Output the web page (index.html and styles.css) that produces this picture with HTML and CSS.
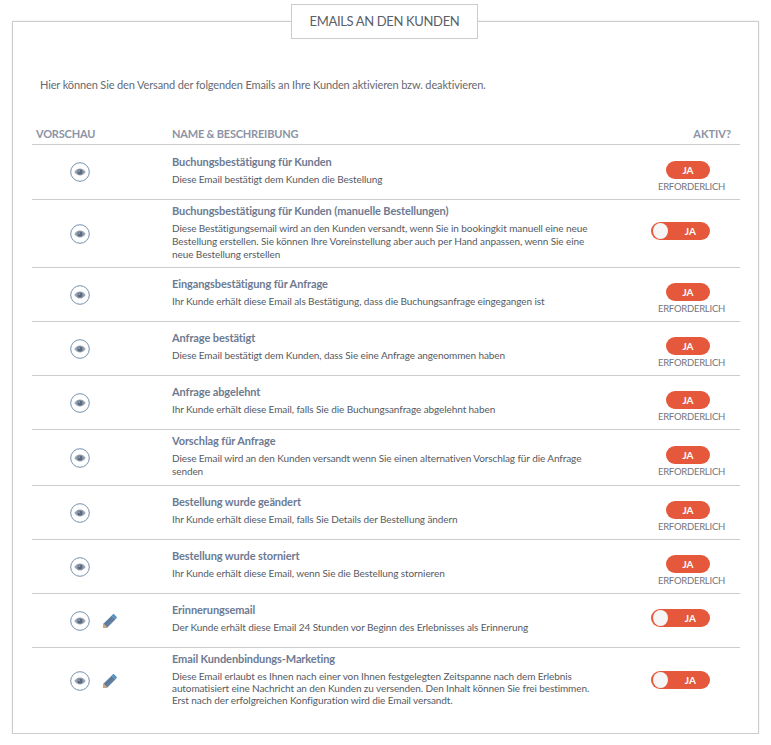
FILE: index.html
```html
<!DOCTYPE html>
<html lang="de">
<head>
    <meta charset="UTF-8">
    <title>Emails an den Kunden</title>
    <link rel="stylesheet" href="styles.css">
</head>
<body>

<svg class="sprite" width="0" height="0">
    <symbol id="eye" viewBox="0 0 20 20">
        <circle cx="10" cy="10" r="9.300" fill="none" stroke="#7590ae" stroke-width="1"/>
        <path d="M4.300 10c1.600-2.300 3.500-3.400 5.700-3.400s4.100 1.100 5.700 3.400c-1.600 2.300-3.500 3.400-5.700 3.400S5.900 12.300 4.300 10z" fill="#98a3b3"/>
        <circle cx="10" cy="10" r="2.600" fill="#5d6b80"/>
        <circle cx="9.100" cy="9.100" r=".7" fill="#d5dae2"/>
    </symbol>
    <symbol id="pencil" viewBox="0 0 16 16">
        <path d="M1 15l.7-4.800L10.400 1.500l4.100 4.100L5.800 14.300z" fill="#62809f"/>
        <path d="M11.400.5c.5-.5 1.200-.5 1.700 0l2.400 2.400c.5.500.5 1.200 0 1.700l-1 1-4.100-4.100z" fill="#4f93c9"/>
        <path d="M1 15l.7-4.800 4.100 4.100z" fill="#d9a77c"/>
        <path d="M3.600 11.400l7.400-7.400" stroke="#4a6a8e" stroke-width=".8"/>
    </symbol>
</svg>

<div class="panel">
    <h2 class="panel-title">EMAILS AN DEN KUNDEN</h2>
    <p class="intro">Hier können Sie den Versand der folgenden Emails an Ihre Kunden aktivieren bzw. deaktivieren.</p>

    <div class="mail-list">
        <div class="row head">
            <div class="col-preview">VORSCHAU</div>
            <div class="col-name">NAME &amp; BESCHREIBUNG</div>
            <div class="col-active">AKTIV?</div>
        </div>

        <div class="row first">
            <div class="col-preview"><svg class="eye"><use href="#eye"/></svg></div>
            <div class="col-name">
                <h4>Buchungsbestätigung für Kunden</h4>
                <p>Diese Email bestätigt dem Kunden die Bestellung</p>
            </div>
            <div class="col-active"><span class="pill">JA</span><span class="req">ERFORDERLICH</span></div>
        </div>

        <div class="row h68">
            <div class="col-preview"><svg class="eye"><use href="#eye"/></svg></div>
            <div class="col-name">
                <h4>Buchungsbestätigung für Kunden (manuelle Bestellungen)</h4>
                <p>Diese Bestätigungsemail wird an den Kunden versandt, wenn Sie in bookingkit manuell eine neue Bestellung erstellen. Sie können Ihre Voreinstellung aber auch per Hand anpassen, wenn Sie eine neue Bestellung erstellen</p>
            </div>
            <div class="col-active"><span class="toggle"><i class="knob"></i>JA</span></div>
        </div>

        <div class="row h54">
            <div class="col-preview"><svg class="eye"><use href="#eye"/></svg></div>
            <div class="col-name">
                <h4>Eingangsbestätigung für Anfrage</h4>
                <p>Ihr Kunde erhält diese Email als Bestätigung, dass die Buchungsanfrage eingegangen ist</p>
            </div>
            <div class="col-active"><span class="pill">JA</span><span class="req">ERFORDERLICH</span></div>
        </div>

        <div class="row h54">
            <div class="col-preview"><svg class="eye"><use href="#eye"/></svg></div>
            <div class="col-name">
                <h4>Anfrage bestätigt</h4>
                <p>Diese Email bestätigt dem Kunden, dass Sie eine Anfrage angenommen haben</p>
            </div>
            <div class="col-active"><span class="pill">JA</span><span class="req">ERFORDERLICH</span></div>
        </div>

        <div class="row h54">
            <div class="col-preview"><svg class="eye"><use href="#eye"/></svg></div>
            <div class="col-name">
                <h4>Anfrage abgelehnt</h4>
                <p>Ihr Kunde erhält diese Email, falls Sie die Buchungsanfrage abgelehnt haben</p>
            </div>
            <div class="col-active"><span class="pill">JA</span><span class="req">ERFORDERLICH</span></div>
        </div>

        <div class="row h56">
            <div class="col-preview"><svg class="eye"><use href="#eye"/></svg></div>
            <div class="col-name">
                <h4>Vorschlag für Anfrage</h4>
                <p>Diese Email wird an den Kunden versandt wenn Sie einen alternativen Vorschlag für die Anfrage senden</p>
            </div>
            <div class="col-active"><span class="pill">JA</span><span class="req">ERFORDERLICH</span></div>
        </div>

        <div class="row h54">
            <div class="col-preview"><svg class="eye"><use href="#eye"/></svg></div>
            <div class="col-name">
                <h4>Bestellung wurde geändert</h4>
                <p>Ihr Kunde erhält diese Email, falls Sie Details der Bestellung ändern</p>
            </div>
            <div class="col-active"><span class="pill">JA</span><span class="req">ERFORDERLICH</span></div>
        </div>

        <div class="row h54">
            <div class="col-preview"><svg class="eye"><use href="#eye"/></svg></div>
            <div class="col-name">
                <h4>Bestellung wurde storniert</h4>
                <p>Ihr Kunde erhält diese Email, wenn Sie die Bestellung stornieren</p>
            </div>
            <div class="col-active"><span class="pill">JA</span><span class="req">ERFORDERLICH</span></div>
        </div>

        <div class="row h54">
            <div class="col-preview icons"><svg class="eye"><use href="#eye"/></svg><svg class="pencil"><use href="#pencil"/></svg></div>
            <div class="col-name">
                <h4>Erinnerungsemail</h4>
                <p>Der Kunde erhält diese Email 24 Stunden vor Beginn des Erlebnisses als Erinnerung</p>
            </div>
            <div class="col-active"><span class="toggle"><i class="knob"></i>JA</span></div>
        </div>

        <div class="row last">
            <div class="col-preview icons"><svg class="eye"><use href="#eye"/></svg><svg class="pencil"><use href="#pencil"/></svg></div>
            <div class="col-name">
                <h4>Email Kundenbindungs-Marketing</h4>
                <p class="wide">Diese Email erlaubt es Ihnen nach einer von Ihnen festgelegten Zeitspanne nach dem Erlebnis automatisiert eine Nachricht an den Kunden zu versenden. Den Inhalt können Sie frei bestimmen. Erst nach der erfolgreichen Konfiguration wird die Email versandt.</p>
            </div>
            <div class="col-active"><span class="toggle"><i class="knob"></i>JA</span></div>
        </div>
    </div>
</div>

</body>
</html>
```

FILE: styles.css
```css
body {
    margin: 0;
    font-family: Lato, "Open Sans", sans-serif;
    color: #5f6570;
    background: #fff;
}
.sprite {
    position: absolute;
}
.panel {
    position: relative;
    height: 711px;
    margin: 21px 12px 0 12px;
    padding: 0 18px 0 19px;
    border: 1px solid #ccc;
    box-shadow: 0 0 2px rgba(0, 0, 0, 0.1);
}
.panel-title {
    position: absolute;
    top: -18px;
    left: 278px;
    width: 185px;
    height: 33px;
    margin: 0;
    border: 1px solid #ccc;
    background: #fff;
    font-size: 13px;
    font-weight: 400;
    letter-spacing: -0.35px;
    line-height: 33px;
    text-align: center;
    color: #5a6068;
}
.intro {
    margin: 0;
    padding: 55px 0 0 8px;
    font-size: 11px;
    letter-spacing: -0.13px;
    line-height: 16px;
    color: #666a70;
}
.mail-list {
    margin-top: 29px;
}
.row {
    display: flex;
    align-items: center;
    border-bottom: 1px solid #ccc;
}
.first {
    height: 54px;
}
.h54 {
    height: 53px;
}
.h56 {
    height: 55px;
}
.h68 {
    height: 67px;
}
.h68 .col-name {
    padding-bottom: 2px;
}
.last {
    height: 65px;
    border-bottom: 0;
}
.last .col-name {
    padding-bottom: 3px;
}
.head {
    height: 22px;
    font-size: 11px;
    font-weight: 700;
    letter-spacing: -0.2px;
    color: #8c93a5;
}
.col-preview {
    display: flex;
    justify-content: center;
    align-items: center;
    width: 96px;
    margin-right: 44px;
    flex-shrink: 0;
}
.head .col-preview {
    justify-content: flex-start;
    padding-left: 4px;
    width: 92px;
}
.col-name {
    flex: 1;
    padding-bottom: 4px;
}
.head .col-name {
    padding-bottom: 0;
}
.col-name h4 {
    margin: 0 0 4px 0;
    font-size: 11px;
    font-weight: 700;
    letter-spacing: -0.1px;
    line-height: 14px;
    color: #6d7a92;
}
.col-name p {
    width: 425px;
    margin: 0;
    font-size: 10px;
    letter-spacing: -0.09px;
    line-height: 13px;
    color: #555a62;
}
.col-name p.wide {
    width: 430px;
    line-height: 12px;
}
.col-active {
    display: flex;
    flex-direction: column;
    align-items: flex-end;
    width: 110px;
    flex-shrink: 0;
}
.head .col-active {
    padding-right: 9px;
    width: 101px;
    letter-spacing: 0;
}
.pill {
    width: 44px;
    height: 18px;
    margin: 9px 30px 0 0;
    border-radius: 9px;
    background: #e5583c;
    color: #fff;
    font-size: 10px;
    font-weight: 700;
    line-height: 18px;
    text-align: center;
}
.req {
    margin: 2px 15px 0 0;
    font-size: 9.500px;
    letter-spacing: -0.25px;
    line-height: 12px;
    color: #72767e;
}
.toggle {
    display: flex;
    align-items: center;
    justify-content: flex-end;
    width: 59px;
    height: 18px;
    margin: 0 30px 6px 0;
    padding-right: 14px;
    box-sizing: border-box;
    border-radius: 9px;
    background: #e5583c;
    color: #fff;
    font-size: 10px;
    font-weight: 700;
    position: relative;
}
.last .toggle {
    margin-bottom: 2px;
}
.knob {
    position: absolute;
    left: 2px;
    top: 1px;
    width: 15px;
    height: 16px;
    border-radius: 50%;
    background: #f6f6f6;
}
.eye {
    width: 20px;
    height: 20px;
}
.pencil {
    width: 15px;
    height: 15px;
}
.icons {
    position: relative;
}
.icons .pencil {
    position: absolute;
    left: 70px;
    top: 3px;
}
```
